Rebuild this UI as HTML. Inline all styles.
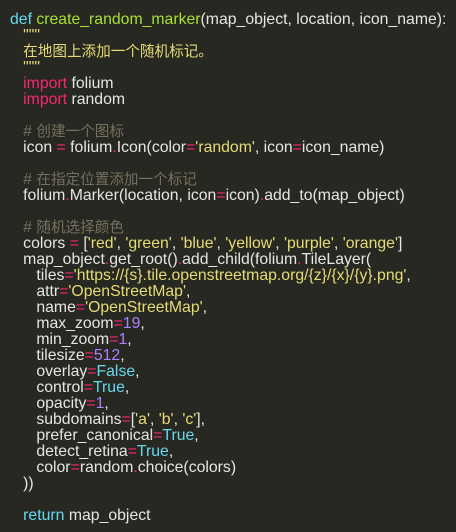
<!DOCTYPE html>
<html><head><meta charset="utf-8"><style>
html,body{margin:0;padding:0;background:#272822;}
body{width:456px;height:532px;overflow:hidden;}
pre{margin:0;position:absolute;left:10px;top:12px;font-family:"Liberation Sans","Noto Sans CJK SC",sans-serif;font-size:15.8px;line-height:16px;color:#e6e6e0;white-space:pre;}
.k{color:#66d9ef}.f{color:#a6e22e}.p{color:#f92672}.s{color:#e6db74}.c{color:#75715e}.n{color:#ae81ff}
.z{font-size:14.6px}
</style></head><body><pre><span class="k">def</span> <span class="f">create_random_marker</span>(map_object, location, icon_name):
   <span class="s">"""</span>
   <span class="s z">在地图上添加一个随机标记。</span>
   <span class="s">"""</span>
   <span class="p">import</span> folium
   <span class="p">import</span> random

   <span class="c"># <span class="z">创建一个图标</span></span>
   icon <span class="p">=</span> folium<span class="p">.</span>Icon(color<span class="p">=</span><span class="s">'random'</span>, icon<span class="p">=</span>icon_name)

   <span class="c"># <span class="z">在指定位置添加一个标记</span></span>
   folium<span class="p">.</span>Marker(location, icon<span class="p">=</span>icon)<span class="p">.</span>add_to(map_object)

   <span class="c"># <span class="z">随机选择颜色</span></span>
   colors <span class="p">=</span> [<span class="s">'red'</span>, <span class="s">'green'</span>, <span class="s">'blue'</span>, <span class="s">'yellow'</span>, <span class="s">'purple'</span>, <span class="s">'orange'</span>]
   map_object<span class="p">.</span>get_root()<span class="p">.</span>add_child(folium<span class="p">.</span>TileLayer(
      tiles<span class="p">=</span><span class="s">'https://{s}.tile.openstreetmap.org/{z}/{x}/{y}.png'</span>,
      attr<span class="p">=</span><span class="s">'OpenStreetMap'</span>,
      name<span class="p">=</span><span class="s">'OpenStreetMap'</span>,
      max_zoom<span class="p">=</span><span class="n">19</span>,
      min_zoom<span class="p">=</span><span class="n">1</span>,
      tilesize<span class="p">=</span><span class="n">512</span>,
      overlay<span class="p">=</span><span class="k">False</span>,
      control<span class="p">=</span><span class="k">True</span>,
      opacity<span class="p">=</span><span class="n">1</span>,
      subdomains<span class="p">=</span>[<span class="s">'a'</span>, <span class="s">'b'</span>, <span class="s">'c'</span>],
      prefer_canonical<span class="p">=</span><span class="k">True</span>,
      detect_retina<span class="p">=</span><span class="k">True</span>,
      color<span class="p">=</span>random<span class="p">.</span>choice(colors)
   ))

   <span class="k">return</span> map_object</pre></body></html>
